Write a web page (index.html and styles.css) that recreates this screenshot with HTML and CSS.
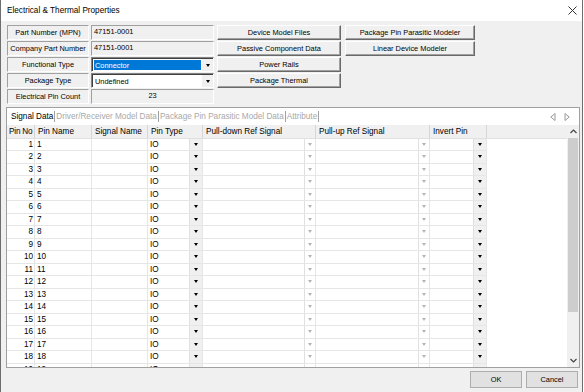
FILE: index.html
```html
<!DOCTYPE html>
<html lang="en">
<head>
    <meta charset="UTF-8">
    <title>Electrical &amp; Thermal Properties</title>
    <link rel="stylesheet" href="styles.css">
</head>
<body>

<div class="window">
    <div class="titlebar">
        <span>Electrical &amp; Thermal Properties</span>
        <svg class="close" width="9" height="9" viewBox="0 0 9 9"><path d="M0.5 0.5L8.5 8.5M8.5 0.5L0.5 8.5" stroke="#333" stroke-width="1"/></svg>
    </div>

    <div class="top">
        <div class="fields">
            <div class="label">Part Number (MPN)</div>
            <div class="value">47151-0001</div>
            <div class="label">Company Part Number</div>
            <div class="value">47151-0001</div>
            <div class="label">Functional Type</div>
            <div class="combo"><span class="sel">Connector</span><span class="cbtn"><i class="tri"></i></span></div>
            <div class="label">Package Type</div>
            <div class="combo"><span class="txt">Undefined</span><span class="cbtn"><i class="tri"></i></span></div>
            <div class="label">Electrical Pin Count</div>
            <div class="value center">23</div>
        </div>
        <div class="btns col1">
            <div class="btn">Device Model Files</div>
            <div class="btn">Passive Component Data</div>
            <div class="btn">Power Rails</div>
            <div class="btn">Package Thermal</div>
        </div>
        <div class="btns col2">
            <div class="btn">Package Pin Parasitic Modeler</div>
            <div class="btn">Linear Device Modeler</div>
        </div>
    </div>

    <div class="panel">
        <div class="tabs">
            <span class="tab on">Signal Data</span>
            <span class="tab">Driver/Receiver Model Data</span>
            <span class="tab">Package Pin Parasitic Model Data</span>
            <span class="tab">Attribute</span>
            <span class="arrows">
                <svg width="6" height="8" viewBox="0 0 6 8"><path d="M5 0.5L0.8 4L5 7.5Z" fill="none" stroke="#9a9a9a" stroke-width="1"/></svg>
                <svg width="6" height="8" viewBox="0 0 6 8"><path d="M1 0.5L5.2 4L1 7.5Z" fill="none" stroke="#9a9a9a" stroke-width="1"/></svg>
            </span>
        </div>
        <div class="gridarea">
            <div class="table">
                <div class="head">
                    <span class="h first">Pin No</span>
                    <span class="h">Pin Name</span>
                    <span class="h">Signal Name</span>
                    <span class="h">Pin Type</span>
                    <span class="h">Pull-down Ref Signal</span>
                    <span class="h">Pull-up Ref Signal</span>
                    <span class="h">Invert Pin</span>
                </div>
                <div class="row"><span class="c num">1</span><span class="c">1</span><span class="c"></span><span class="c">IO<b class="dd"></b></span><span class="c"><b class="dd off"></b></span><span class="c"><b class="dd off"></b></span><span class="c"><b class="dd"></b></span></div>
                <div class="row"><span class="c num">2</span><span class="c">2</span><span class="c"></span><span class="c">IO<b class="dd"></b></span><span class="c"><b class="dd off"></b></span><span class="c"><b class="dd off"></b></span><span class="c"><b class="dd"></b></span></div>
                <div class="row"><span class="c num">3</span><span class="c">3</span><span class="c"></span><span class="c">IO<b class="dd"></b></span><span class="c"><b class="dd off"></b></span><span class="c"><b class="dd off"></b></span><span class="c"><b class="dd"></b></span></div>
                <div class="row"><span class="c num">4</span><span class="c">4</span><span class="c"></span><span class="c">IO<b class="dd"></b></span><span class="c"><b class="dd off"></b></span><span class="c"><b class="dd off"></b></span><span class="c"><b class="dd"></b></span></div>
                <div class="row"><span class="c num">5</span><span class="c">5</span><span class="c"></span><span class="c">IO<b class="dd"></b></span><span class="c"><b class="dd off"></b></span><span class="c"><b class="dd off"></b></span><span class="c"><b class="dd"></b></span></div>
                <div class="row"><span class="c num">6</span><span class="c">6</span><span class="c"></span><span class="c">IO<b class="dd"></b></span><span class="c"><b class="dd off"></b></span><span class="c"><b class="dd off"></b></span><span class="c"><b class="dd"></b></span></div>
                <div class="row"><span class="c num">7</span><span class="c">7</span><span class="c"></span><span class="c">IO<b class="dd"></b></span><span class="c"><b class="dd off"></b></span><span class="c"><b class="dd off"></b></span><span class="c"><b class="dd"></b></span></div>
                <div class="row"><span class="c num">8</span><span class="c">8</span><span class="c"></span><span class="c">IO<b class="dd"></b></span><span class="c"><b class="dd off"></b></span><span class="c"><b class="dd off"></b></span><span class="c"><b class="dd"></b></span></div>
                <div class="row"><span class="c num">9</span><span class="c">9</span><span class="c"></span><span class="c">IO<b class="dd"></b></span><span class="c"><b class="dd off"></b></span><span class="c"><b class="dd off"></b></span><span class="c"><b class="dd"></b></span></div>
                <div class="row"><span class="c num">10</span><span class="c">10</span><span class="c"></span><span class="c">IO<b class="dd"></b></span><span class="c"><b class="dd off"></b></span><span class="c"><b class="dd off"></b></span><span class="c"><b class="dd"></b></span></div>
                <div class="row"><span class="c num">11</span><span class="c">11</span><span class="c"></span><span class="c">IO<b class="dd"></b></span><span class="c"><b class="dd off"></b></span><span class="c"><b class="dd off"></b></span><span class="c"><b class="dd"></b></span></div>
                <div class="row"><span class="c num">12</span><span class="c">12</span><span class="c"></span><span class="c">IO<b class="dd"></b></span><span class="c"><b class="dd off"></b></span><span class="c"><b class="dd off"></b></span><span class="c"><b class="dd"></b></span></div>
                <div class="row"><span class="c num">13</span><span class="c">13</span><span class="c"></span><span class="c">IO<b class="dd"></b></span><span class="c"><b class="dd off"></b></span><span class="c"><b class="dd off"></b></span><span class="c"><b class="dd"></b></span></div>
                <div class="row"><span class="c num">14</span><span class="c">14</span><span class="c"></span><span class="c">IO<b class="dd"></b></span><span class="c"><b class="dd off"></b></span><span class="c"><b class="dd off"></b></span><span class="c"><b class="dd"></b></span></div>
                <div class="row"><span class="c num">15</span><span class="c">15</span><span class="c"></span><span class="c">IO<b class="dd"></b></span><span class="c"><b class="dd off"></b></span><span class="c"><b class="dd off"></b></span><span class="c"><b class="dd"></b></span></div>
                <div class="row"><span class="c num">16</span><span class="c">16</span><span class="c"></span><span class="c">IO<b class="dd"></b></span><span class="c"><b class="dd off"></b></span><span class="c"><b class="dd off"></b></span><span class="c"><b class="dd"></b></span></div>
                <div class="row"><span class="c num">17</span><span class="c">17</span><span class="c"></span><span class="c">IO<b class="dd"></b></span><span class="c"><b class="dd off"></b></span><span class="c"><b class="dd off"></b></span><span class="c"><b class="dd"></b></span></div>
                <div class="row"><span class="c num">18</span><span class="c">18</span><span class="c"></span><span class="c">IO<b class="dd"></b></span><span class="c"><b class="dd off"></b></span><span class="c"><b class="dd off"></b></span><span class="c"><b class="dd"></b></span></div>
                <div class="row"><span class="c num">19</span><span class="c">19</span><span class="c"></span><span class="c">IO<b class="dd"></b></span><span class="c"><b class="dd off"></b></span><span class="c"><b class="dd off"></b></span><span class="c"><b class="dd"></b></span></div>
            </div>
            <div class="vscroll">
                <span class="arr"><svg width="7" height="5" viewBox="0 0 7 5"><path d="M0.5 4L3.5 1L6.5 4" fill="none" stroke="#444" stroke-width="1.2"/></svg></span>
                <span class="thumb"></span>
                <span class="track"></span>
                <span class="arr"><svg width="7" height="5" viewBox="0 0 7 5"><path d="M0.5 1L3.5 4L6.5 1" fill="none" stroke="#444" stroke-width="1.2"/></svg></span>
            </div>
        </div>
    </div>

    <div class="footer">
        <div class="fbtn">OK</div>
        <div class="fbtn">Cancel</div>
    </div>
</div>

</body>
</html>
```

FILE: styles.css
```css
body {
    margin: 0;
    background: #ffffff;
    font-family: "Liberation Sans", Arial, sans-serif;
    color: #000000;
}

.window {
    width: 583px;
    height: 392px;
    box-sizing: border-box;
    border-left: 1px solid #6e6e6e;
    border-right: 1px solid #6e6e6e;
    background: #f0f0f0;
    overflow: hidden;
}

.titlebar {
    height: 21px;
    background: #ffffff;
    display: flex;
    align-items: center;
    justify-content: space-between;
    padding: 0 5px 0 6px;
    font-size: 8.2px;
}

/* top form */
.top {
    display: flex;
    align-items: flex-start;
    height: 79px;
    padding: 4px 0 0 6px;
}
.fields {
    display: grid;
    grid-template-columns: 82px 123px;
    grid-auto-rows: 15px;
    gap: 1px 2px;
}
.label, .value {
    box-sizing: border-box;
    border: 1px solid;
    border-color: #a0a0a0 #ffffff #ffffff #a0a0a0;
    font-size: 7.4px;
}
.label {
    display: flex;
    align-items: center;
    justify-content: center;
    white-space: nowrap;
}
.value {
    padding: 1px 0 0 2px;
}
.value.center {
    text-align: center;
    padding-left: 0;
}
.combo {
    box-sizing: border-box;
    border: 1px solid;
    border-color: #828282 #ffffff #ffffff #828282;
    box-shadow: inset 1px 1px #404040;
    background: #ffffff;
    display: flex;
    font-size: 7.4px;
}
.sel, .txt {
    flex: 1;
    display: flex;
    align-items: center;
    margin: 2px 1px 1px 2px;
    padding-left: 1px;
}
.sel {
    background: #0078d7;
    color: #ffffff;
}
.cbtn {
    width: 11px;
    margin: 1px 0 0 0;
    background: #f0f0f0;
    display: flex;
    align-items: center;
    justify-content: center;
}
.tri {
    border-left: 2.5px solid transparent;
    border-right: 2.5px solid transparent;
    border-top: 3px solid #000000;
}

.btns {
    display: flex;
    flex-direction: column;
    gap: 1px;
}
.col1 { width: 124px; margin-left: 3px; }
.col2 { width: 130px; margin-left: 4px; }
.btn {
    height: 15px;
    box-sizing: border-box;
    border: 1px solid;
    border-color: #ffffff #696969 #696969 #ffffff;
    box-shadow: inset -1px -1px #a0a0a0;
    background: #f0f0f0;
    font-size: 7.4px;
    display: flex;
    align-items: center;
    justify-content: center;
    white-space: nowrap;
}

/* tab panel */
.panel {
    margin: 3px 0 0 5px;
    width: 574px;
    height: 261px;
    box-sizing: border-box;
    border: 1px solid #a0a0a0;
    background: #ffffff;
    display: flex;
    flex-direction: column;
}
.tabs {
    height: 17px;
    flex: none;
    display: flex;
    align-items: center;
    padding-left: 3px;
    font-size: 8.2px;
    color: #a8a8a8;
}
.tab {
    padding: 0 1px;
    border-right: 1px solid #a0a0a0;
    line-height: 11px;
}
.tab.on { color: #000000; }
.arrows {
    margin-left: auto;
    margin-right: 9px;
    display: flex;
    gap: 8px;
}

.gridarea {
    flex: 1;
    display: flex;
    min-height: 0;
}
.table {
    flex: 1;
    overflow: hidden;
    font-size: 8.2px;
}
.head, .row {
    display: grid;
    grid-template-columns: 28px 57px 56px 55px 113px 114px 57px;
}
.head {
    height: 13.5px;
    background: #f0f0f0;
    border-bottom: 1px solid #e0e0e0;
    box-sizing: border-box;
}
.h {
    display: flex;
    align-items: center;
    padding-left: 3px;
    border-right: 1px solid #d6d6d6;
    white-space: nowrap;
    overflow: hidden;
}
.h.first {
    padding-left: 2px;
    letter-spacing: -0.2px;
}
.row {
    height: 12.5px;
}
.c {
    display: flex;
    align-items: center;
    padding-left: 2px;
    box-sizing: border-box;
    border-right: 1px solid #e6e6e6;
    border-bottom: 1px solid #e6e6e6;
    white-space: nowrap;
    overflow: hidden;
}
.c.num {
    justify-content: flex-end;
    padding: 0 1px 0 0;
}
.dd {
    margin-left: auto;
    width: 12px;
    height: 100%;
    background: #f0f0f0;
    border-left: 1px solid #e0e0e0;
    display: flex;
    align-items: center;
    justify-content: center;
}
.dd::after {
    content: "";
    border-left: 2.5px solid transparent;
    border-right: 2.5px solid transparent;
    border-top: 3px solid #000000;
}
.dd.off {
    width: 10px;
    background: #ffffff;
}
.dd.off::after {
    border-top-color: #b4b4b4;
}

.vscroll {
    width: 12px;
    flex: none;
    background: #f0f0f0;
    display: flex;
    flex-direction: column;
}
.arr {
    height: 13px;
    flex: none;
    display: flex;
    align-items: center;
    justify-content: center;
}
.thumb {
    height: 174px;
    flex: none;
    margin: 0 1px;
    background: #cdcdcd;
}
.track { flex: 1; }

.footer {
    display: flex;
    justify-content: flex-end;
    gap: 4px;
    padding: 3px 4px 0 0;
}
.fbtn {
    width: 52px;
    height: 17px;
    box-sizing: border-box;
    border: 1px solid #adadad;
    background: #e1e1e1;
    font-size: 7.4px;
    display: flex;
    align-items: center;
    justify-content: center;
}
```
